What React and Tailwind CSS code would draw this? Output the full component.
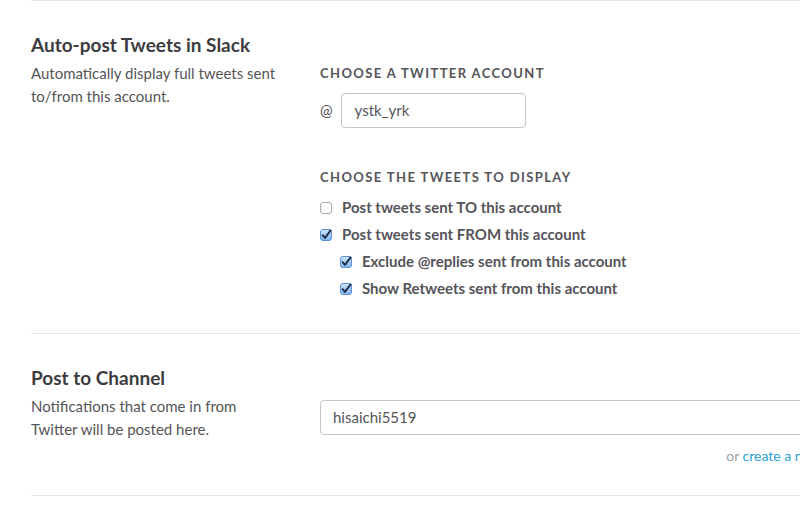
import React from 'react';

const Check = ({ checked }) =>
  checked ? (
    <svg width="12" height="12" viewBox="0 0 12 12" className="shrink-0">
      <defs>
        <linearGradient id="cbg" x1="0" y1="0" x2="0" y2="1">
          <stop offset="0" stopColor="#cfe4fb" />
          <stop offset="1" stopColor="#7fb3ee" />
        </linearGradient>
      </defs>
      <rect x="0.5" y="0.5" width="11" height="11" rx="2.5" fill="url(#cbg)" stroke="#5c8fd1" />
      <path d="M2.6 6.2 L5 8.9 L10.6 1.4" fill="none" stroke="#1d2b4a" strokeWidth="1.9" strokeLinecap="round" strokeLinejoin="round" />
    </svg>
  ) : (
    <svg width="12" height="12" viewBox="0 0 12 12" className="shrink-0">
      <rect x="0.5" y="0.5" width="11" height="11" rx="2.5" fill="#fbfbfb" stroke="#a9a9a9" />
    </svg>
  );

const Option = ({ checked, label, nested }) => (
  <label className={`flex items-center gap-[10px] h-[27px] ${nested ? 'pl-5' : ''}`}>
    <Check checked={checked} />
    <span className="text-[15px] font-bold text-[#555459]">{label}</span>
  </label>
);

export default function App() {
  return (
    <div className="w-[800px] h-[518px] overflow-hidden bg-white" style={{ fontFamily: 'Lato, "Open Sans", sans-serif' }}>
      <div className="ml-[31px] w-[841px]">
        <section className="border-t border-[#e8e8e8] flex pt-[31px] pb-[31px]">
          <div className="w-[289px] shrink-0">
            <h2 className="text-[19px] font-bold text-[#3d3c40] leading-[25px]">Auto-post Tweets in Slack</h2>
            <p className="mt-[5px] text-[15px] leading-[23px] text-[#555459] w-[258px]">
              Automatically display full tweets sent to/from this account.
            </p>
          </div>
          <div className="flex-1">
            <div className="mt-[32px] text-[13px] font-bold tracking-[1.4px] text-[#555459] leading-[18px]">CHOOSE A TWITTER ACCOUNT</div>
            <div className="mt-[11px] flex items-center gap-[8px]">
              <span className="text-[15px] text-[#555459]">@</span>
              <div className="w-[185px] h-[35px] border border-[#c5c5c5] rounded-[4px] flex items-center px-[13px] text-[15px] text-[#555459]">
                ystk_yrk
              </div>
            </div>
            <div className="mt-[40px] text-[13px] font-bold tracking-[1.4px] text-[#555459] leading-[18px]">CHOOSE THE TWEETS TO DISPLAY</div>
            <div className="mt-[8px] flex flex-col">
              <Option label="Post tweets sent TO this account" />
              <Option checked label="Post tweets sent FROM this account" />
              <Option checked nested label="Exclude @replies sent from this account" />
              <Option checked nested label="Show Retweets sent from this account" />
            </div>
          </div>
        </section>
        <section className="border-t border-[#e8e8e8] flex pt-[31px] pb-[29px]">
          <div className="w-[289px] shrink-0">
            <h2 className="text-[19px] font-bold text-[#3d3c40] leading-[25px]">Post to Channel</h2>
            <p className="mt-[5px] text-[15px] leading-[23px] text-[#555459] w-[240px]">
              Notifications that come in from Twitter will be posted here.
            </p>
          </div>
          <div className="flex-1 pt-[35px]">
            <div className="h-[35px] border border-[#c5c5c5] rounded-[4px] flex items-center px-[12px] text-[15px] text-[#555459]">
              hisaichi5519
            </div>
            <div className="mt-[10px] text-right text-[14px] text-[#9e9ea6] whitespace-nowrap">
              or <span className="text-[#2a9fd8]">create a new channel</span>
            </div>
          </div>
        </section>
        <div className="border-t border-[#e8e8e8]" />
      </div>
    </div>
  );
}
